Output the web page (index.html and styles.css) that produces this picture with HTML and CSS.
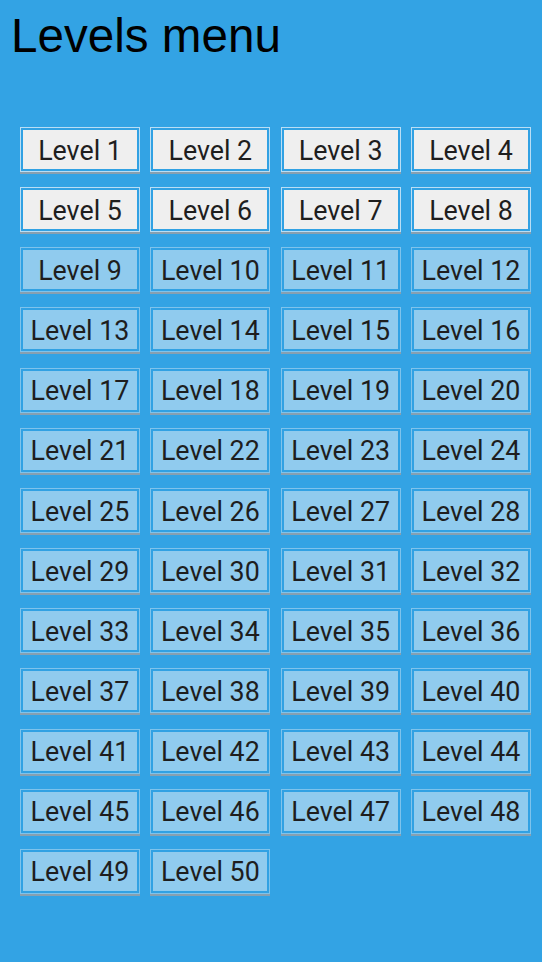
FILE: index.html
```html
<!DOCTYPE html>
<html>
<head>
<meta charset="utf-8">
<link rel="stylesheet" href="styles.css">
</head>
<body>
<h1 class="title">Levels menu</h1>
<div class="grid">
<button class="lvl open">Level 1</button>
<button class="lvl open">Level 2</button>
<button class="lvl open">Level 3</button>
<button class="lvl open">Level 4</button>
<button class="lvl open">Level 5</button>
<button class="lvl open">Level 6</button>
<button class="lvl open">Level 7</button>
<button class="lvl open">Level 8</button>
<button class="lvl">Level 9</button>
<button class="lvl">Level 10</button>
<button class="lvl">Level 11</button>
<button class="lvl">Level 12</button>
<button class="lvl">Level 13</button>
<button class="lvl">Level 14</button>
<button class="lvl">Level 15</button>
<button class="lvl">Level 16</button>
<button class="lvl">Level 17</button>
<button class="lvl">Level 18</button>
<button class="lvl">Level 19</button>
<button class="lvl">Level 20</button>
<button class="lvl">Level 21</button>
<button class="lvl">Level 22</button>
<button class="lvl">Level 23</button>
<button class="lvl">Level 24</button>
<button class="lvl">Level 25</button>
<button class="lvl">Level 26</button>
<button class="lvl">Level 27</button>
<button class="lvl">Level 28</button>
<button class="lvl">Level 29</button>
<button class="lvl">Level 30</button>
<button class="lvl">Level 31</button>
<button class="lvl">Level 32</button>
<button class="lvl">Level 33</button>
<button class="lvl">Level 34</button>
<button class="lvl">Level 35</button>
<button class="lvl">Level 36</button>
<button class="lvl">Level 37</button>
<button class="lvl">Level 38</button>
<button class="lvl">Level 39</button>
<button class="lvl">Level 40</button>
<button class="lvl">Level 41</button>
<button class="lvl">Level 42</button>
<button class="lvl">Level 43</button>
<button class="lvl">Level 44</button>
<button class="lvl">Level 45</button>
<button class="lvl">Level 46</button>
<button class="lvl">Level 47</button>
<button class="lvl">Level 48</button>
<button class="lvl">Level 49</button>
<button class="lvl">Level 50</button>
</div>
</body>
</html>
```

FILE: styles.css
```css
html, body {
  margin: 0;
  padding: 0;
  background: #33a3e4;
  height: 100%;
}
body {
  padding: 12px 0 0 0;
  box-sizing: border-box;
}
.title {
  margin: 0 0 0 11px;
  font-family: "Liberation Sans", Arial, sans-serif;
  font-weight: normal;
  font-size: 47.6px;
  line-height: 48px;
  color: #000;
}
.grid {
  margin: 67px 0 0 20px;
  width: 511px;
  display: grid;
  grid-template-columns: repeat(4, 1fr);
  column-gap: 10.33px;
  row-gap: 15.17px;
}
.lvl {
  height: 45px;
  padding: 3px 0 0 0;
  margin: 0;
  box-sizing: border-box;
  border: 1px solid #7ec3ec;
  background: #90cbee;
  box-shadow: inset 0 0 0 2px #31a1e3, 0 2px 0 rgba(150, 160, 168, 0.85);
  font-family: Roboto, "Liberation Sans", sans-serif;
  font-size: 26.8px;
  color: #1e1e1e;
  text-align: center;
  line-height: 1;
}
.lvl.open {
  background: #efefef;
  border-color: #b9def5;
}
```
